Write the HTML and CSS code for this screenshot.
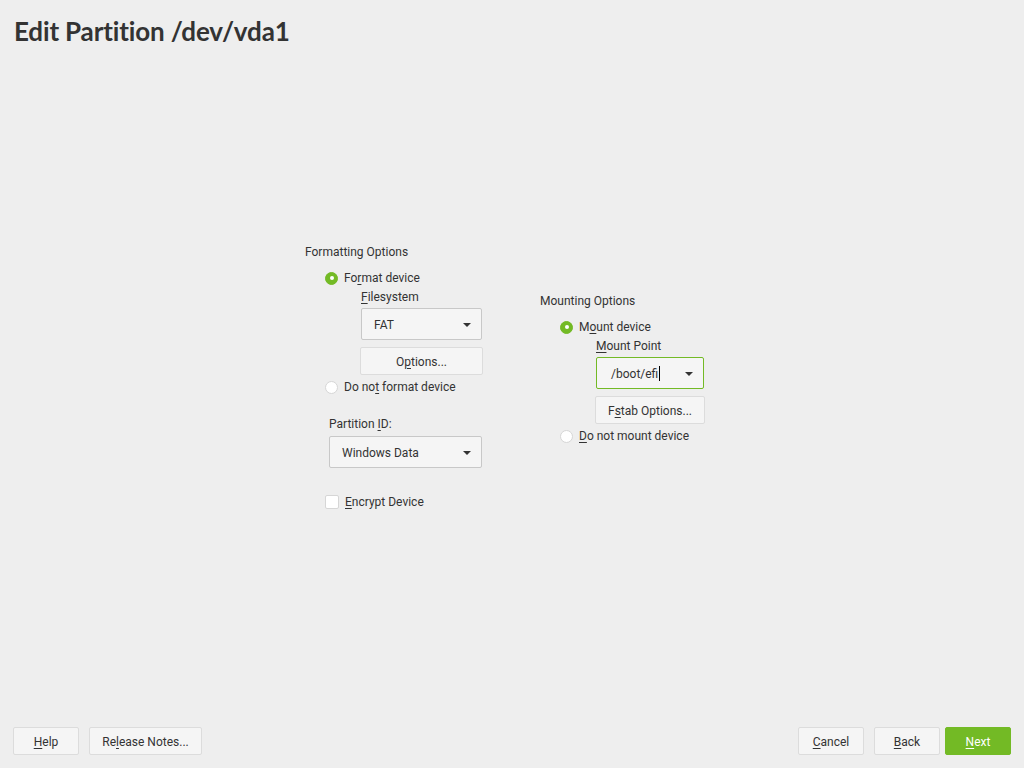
FILE: index.html
```html
<!DOCTYPE html>
<html>
<head>
<meta charset="utf-8">
<link rel="stylesheet" href="styles.css">
</head>
<body>
<div class="app">
  <h1 class="title">Edit Partition /dev/vda1</h1>
  <main class="main">
    <div class="cols">
      <section class="col col-left">
        <div class="group-label">Formatting Options</div>
        <div class="indent">
          <label class="radio-row"><span class="radio on"></span><span>Fo<u>r</u>mat device</span></label>
          <div class="sub">
            <div class="field-label"><u>F</u>ilesystem</div>
            <div class="combo w-fs"><span>FAT</span><span class="arrow"></span></div>
            <button class="btn w-opt">O<u>p</u>tions...</button>
          </div>
          <label class="radio-row"><span class="radio"></span><span>Do no<u>t</u> format device</span></label>
          <div class="pid">
            <div class="field-label">Partition <u>I</u>D:</div>
            <div class="combo w-pid"><span>Windows Data</span><span class="arrow"></span></div>
          </div>
          <label class="check-row"><span class="check"></span><span><u>E</u>ncrypt Device</span></label>
        </div>
      </section>
      <section class="col col-right">
        <div class="group-label">Mounting Options</div>
        <div class="indent">
          <label class="radio-row"><span class="radio on"></span><span>M<u>o</u>unt device</span></label>
          <div class="sub">
            <div class="field-label"><u>M</u>ount Point</div>
            <div class="combo w-mp focus"><span>/boot/efi<span class="caret"></span></span><span class="arrow"></span></div>
            <button class="btn w-fstab">F<u>s</u>tab Options...</button>
          </div>
          <label class="radio-row"><span class="radio"></span><span><u>D</u>o not mount device</span></label>
        </div>
      </section>
    </div>
  </main>
  <footer class="footer">
    <div class="btns">
      <button class="btn fb w-help"><u>H</u>elp</button>
      <button class="btn fb w-rn">Re<u>l</u>ease Notes...</button>
    </div>
    <div class="btns right">
      <button class="btn fb w-nav"><u>C</u>ancel</button>
      <button class="btn fb w-nav"><u>B</u>ack</button>
      <button class="btn fb w-nav primary"><u>N</u>ext</button>
    </div>
  </footer>
</div>
</body>
</html>
```

FILE: styles.css
```css
* { box-sizing: border-box; }
html, body { margin: 0; padding: 0; }
body {
  background: #eeeeee;
  color: #333333;
  font-family: Roboto, "Liberation Sans", sans-serif;
  font-size: 12px;
}
.app {
  width: 1024px;
  height: 768px;
  display: flex;
  flex-direction: column;
}
.title {
  margin: 0;
  padding: 14px 0 0 14px;
  font-family: Lato, "Open Sans", sans-serif;
  font-weight: 700;
  font-size: 26px;
  letter-spacing: -0.15px;
  line-height: 34px;
  color: #333333;
}
.main {
  flex: 1;
  padding-top: 196px;
}
.cols {
  display: flex;
  padding-left: 305px;
}
.col-left { width: 235px; }
.col-right { padding-top: 49px; }
.group-label {
  line-height: 16px;
  height: 16px;
}
.indent { padding-left: 20px; padding-top: 10px; }
.radio-row, .check-row {
  display: flex;
  align-items: center;
  height: 16px;
  line-height: 16px;
}
.radio {
  width: 13px;
  height: 13px;
  border-radius: 50%;
  background: #ffffff;
  border: 1px solid #d6d6d6;
  margin-right: 6px;
  flex: none;
}
.radio.on {
  background: #73ba25;
  border-color: #73ba25;
  position: relative;
}
.radio.on::after {
  content: "";
  position: absolute;
  left: 3.5px;
  top: 3.5px;
  width: 4px;
  height: 4px;
  border-radius: 50%;
  background: #ffffff;
}
.check {
  width: 14px;
  height: 14px;
  border: 1px solid #d6d6d6;
  background: #ffffff;
  border-radius: 2px;
  margin-right: 6px;
  flex: none;
}
u { text-decoration: underline; text-underline-offset: 2px; }
.sub { padding-left: 36px; padding-top: 3px; padding-bottom: 4px; }
.field-label { line-height: 16px; height: 16px; margin-bottom: 3px; }
.combo {
  height: 32px;
  border: 1px solid #c8c8c8;
  border-radius: 2px;
  background: #f5f5f5;
  display: flex;
  align-items: center;
  justify-content: space-between;
  padding: 1px 10px 0 12px;
}
.combo.focus { border-color: #73ba25; padding-left: 14px; }
.arrow {
  width: 0;
  height: 0;
  border-left: 4px solid transparent;
  border-right: 4px solid transparent;
  border-top: 4px solid #333333;
}
.caret {
  display: inline-block;
  width: 1px;
  height: 15px;
  background: #000000;
  vertical-align: -3px;
  margin-left: 1px;
}
.w-fs { width: 121px; }
.w-pid { width: 153px; }
.w-mp { width: 108px; }
.btn {
  font-family: Roboto, "Liberation Sans", sans-serif;
  font-size: 12px;
  color: #333333;
  background: #f5f5f5;
  border: 1px solid #dcdcdc;
  border-radius: 2px;
  height: 28px;
  padding: 1px 0 0 0;
  display: flex;
  align-items: center;
  justify-content: center;
}
.w-opt { width: 123px; margin-top: 7px; margin-left: -1px; }
.w-fstab { width: 110px; margin-top: 7px; margin-left: -1px; }
.pid { padding: 21px 0 0 4px; }
.pid .field-label { margin-bottom: 4px; }
.check-row { margin-top: 26px; }
.footer {
  display: flex;
  justify-content: space-between;
  padding: 0 13px 13px 13px;
}
.btns { display: flex; gap: 10px; }
.btns.right .btn.primary { margin-left: -5px; }
.w-help { width: 66px; }
.w-rn { width: 113px; }
.w-nav { width: 66px; }
.btn.primary {
  background: #73ba25;
  border-color: #73ba25;
  color: #ffffff;
}
```
